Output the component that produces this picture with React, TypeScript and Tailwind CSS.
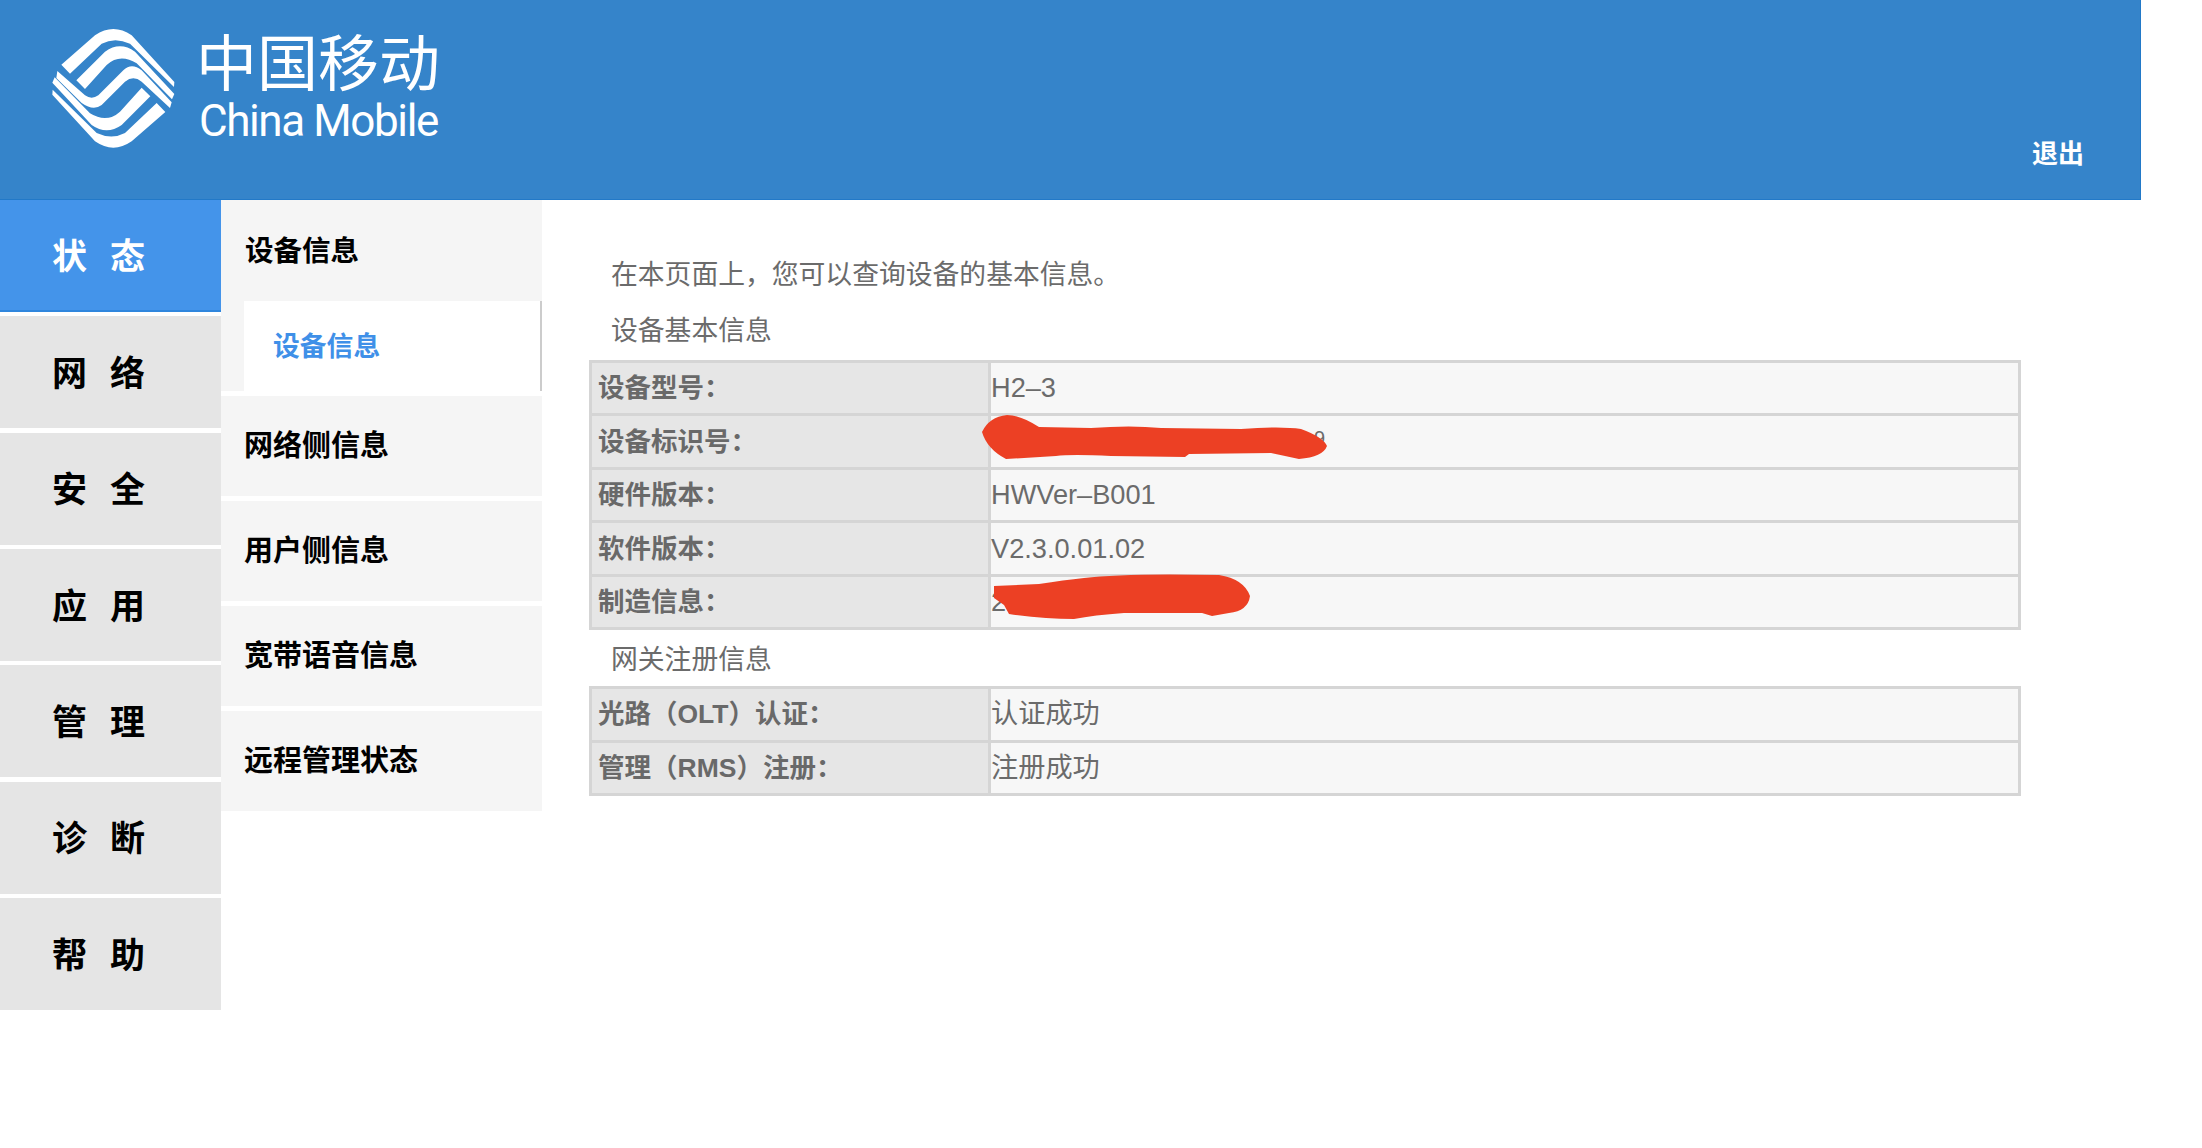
const NAV = ["状态", "网络", "安全", "应用", "管理", "诊断", "帮助"];
const SUB = ["网络侧信息", "用户侧信息", "宽带语音信息", "远程管理状态"];

function Logo() {
  const a = "M94 164 L195 76 Q250 38 305 76 L433 216 L432 231 L300 101 Q255 80 215 101 L120 191 Z";
  const b = "M139 211 L225 125 Q270 93 315 125 L433 252 L426 268 L320 160 Q270 129 230 165 L165 237 Z";
  return (
    <svg width="170" height="150" viewBox="0 0 510 450" className="shrink-0" fill="#ffffff">
      <path d={a} />
      <path d={b} />
      <path d="M82 183 L165 256 Q185 270 205 256 L280 181 Q305 157 335 181 L425 277 L420 294 L335 215 Q310 195 285 215 L215 285 Q190 304 155 279 L79 204 Z" />
      <path d={a} transform="rotate(180 250 235)" />
      <path d={b} transform="rotate(180 250 235)" />
    </svg>
  );
}

function Row({ label, children }: { label: string; children: React.ReactNode }) {
  return (
    <div className="flex flex-1 border-b-[3px] border-[#d5d5d5] last:border-b-0">
      <div className="w-[399px] shrink-0 flex items-center pl-[6px] pt-[2px] bg-[#e6e6e6] border-r-[3px] border-[#d5d5d5] font-bold text-[26.5px] text-[#696969]">
        {label}
      </div>
      <div className="relative flex-1 flex items-center pt-[1px] bg-[#f7f7f7] text-[27.2px] text-[#6b6b6b]">{children}</div>
    </div>
  );
}

function Table({ h, children }: { h: string; children: React.ReactNode }) {
  return <div className={`flex flex-col w-[1432px] border-[3px] border-[#d5d5d5] ${h}`}>{children}</div>;
}

export default function App() {
  return (
    <div className="w-[2202px] h-[1148px] overflow-hidden bg-white font-['Liberation_Sans','Noto_Sans_CJK_SC',sans-serif]">
      <header className="w-[2141px] h-[200px] bg-[#3584ca] border-b border-r border-[#2279c8] flex justify-between">
        <div className="flex items-start pl-[30px] pt-[10px]">
          <Logo />
          <div className="flex flex-col text-white pt-[16px] -ml-[1px]">
            <div className="-ml-[3px] text-[61px] leading-[68px] font-['Noto_Sans_CJK_SC',sans-serif] font-normal whitespace-nowrap">中国移动</div>
            <div className="pt-[2px] text-[44px] leading-[50px] font-['Roboto',sans-serif] tracking-[-1.4px] whitespace-nowrap">China Mobile</div>
          </div>
        </div>
        <div className="flex items-end pr-[56px] pb-[29px] text-white font-bold text-[26px] leading-[32px]">退出</div>
      </header>
      <div className="flex items-start">
        <nav className="w-[221px] shrink-0 flex flex-col gap-[4.33px]">
          {NAV.map((n, i) => (
            <div
              key={n}
              className={`h-[112px] flex items-center pl-[52px] pt-[4px] gap-[23px] font-bold text-[35px] ${
                i === 0 ? "bg-[#4494ea] border-b-2 border-[#2f86dd] text-white" : "bg-[#e5e5e5] text-black"
              }`}
            >
              <span>{n[0]}</span>
              <span>{n[1]}</span>
            </div>
          ))}
        </nav>
        <aside className="w-[321px] shrink-0 flex flex-col gap-[5px]">
          <div className="bg-[#f5f5f5]">
            <div className="h-[101px] flex items-center pl-[24px] pt-[2px] font-bold text-[28.5px] text-black">设备信息</div>
            <div className="ml-[23px] h-[90px] bg-white border-r-2 border-[#cccccc] flex items-center pl-[29px] pt-[2px] font-bold text-[26.8px] text-[#3f90e8]">
              设备信息
            </div>
          </div>
          {SUB.map((s) => (
            <div key={s} className="h-[100px] bg-[#f5f5f5] flex items-center pl-[23px] pt-[2px] font-bold text-[29px] text-black">
              {s}
            </div>
          ))}
        </aside>
        <main className="pl-[47px] flex-1">
          <div className="pl-[22px] pt-[58px] text-[26.8px] leading-[34px] text-[#6b6b6b]">在本页面上，您可以查询设备的基本信息。</div>
          <div className="pl-[22px] pt-[22px] pb-[12px] text-[26.8px] leading-[34px] text-[#6b6b6b]">设备基本信息</div>
          <Table h="h-[270px]">
            <Row label="设备型号：">H2–3</Row>
            <Row label="设备标识号：">
              <span className="pl-[323px] text-[20px] -translate-y-[4px]">9</span>
              <svg className="absolute left-[-10px] top-[-1px]" width="346" height="44" viewBox="0 0 346 44" fill="#ec4024">
                <path d="M1 17 Q8 2 26 0 Q40 0 58 12 L110 13 Q150 10 180 13 L260 14 Q300 11 320 14 Q342 22 346 31 Q342 42 318 44 L290 38 L208 39 L204 42 L130 41 Q90 39 75 41 L25 44 Q6 34 1 17 Z" />
              </svg>
            </Row>
            <Row label="硬件版本：">HWVer–B001</Row>
            <Row label="软件版本：">V2.3.0.01.02</Row>
            <Row label="制造信息：">
              <span>2</span>
              <svg className="absolute left-[3px] top-[-3px]" width="256" height="45" viewBox="0 0 256 45" fill="#ec4024">
                <path d="M0 12 L45 10 Q70 6 90 4 Q130 -1 225 1 Q250 5 256 22 Q254 37 235 39 L218 42 L208 39 L130 39 Q100 41 80 45 Q50 45 15 40 L10 31 L0 24 Z" />
              </svg>
            </Row>
          </Table>
          <div className="pl-[22px] pt-[13px] pb-[9px] text-[26.8px] leading-[34px] text-[#6b6b6b]">网关注册信息</div>
          <Table h="h-[110px]">
            <Row label="光路（OLT）认证：">认证成功</Row>
            <Row label="管理（RMS）注册：">注册成功</Row>
          </Table>
        </main>
      </div>
    </div>
  );
}
